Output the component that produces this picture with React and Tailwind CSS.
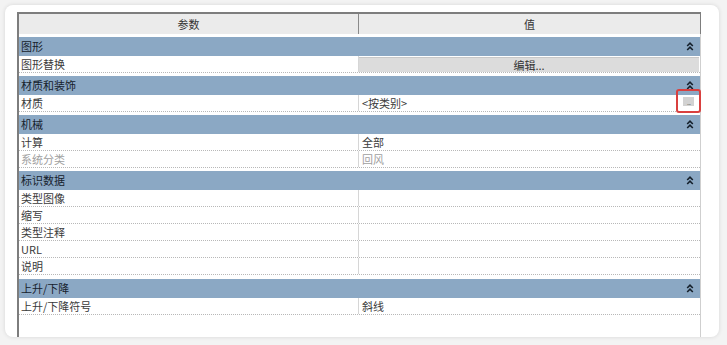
import React from "react";

const font = { fontFamily: '"Noto Sans CJK SC", "Noto Sans", sans-serif' };

function Chevrons() {
  return (
    <svg width="8" height="9" viewBox="0 0 8 9" className="block shrink-0">
      <path d="M1.2 4 L4 1.2 L6.8 4" fill="none" stroke="#16212c" strokeWidth="1.6" />
      <path d="M1.2 8 L4 5.2 L6.8 8" fill="none" stroke="#16212c" strokeWidth="1.6" />
    </svg>
  );
}

function Section({ title }) {
  return (
    <div className="relative h-[19px] shrink-0 bg-[#8ba8c4] flex items-center justify-between pl-[2px] pr-[6px] text-[11px] text-[#16212c]">
      <span className="leading-none">{title}</span>
      <Chevrons />
    </div>
  );
}

function Row({ label, value, gray, children }) {
  return (
    <div className="h-[17px] shrink-0 flex border-b border-dotted border-[#b8b8b8] text-[11px]">
      <div className={`w-[340px] shrink-0 flex items-center pl-[2px] border-r border-[#d6d6d6] ${gray ? "text-[#a0a0a0]" : "text-[#3a3a3a]"}`}>
        <span className="leading-none">{label}</span>
      </div>
      <div className={`flex-1 flex items-center pl-[3px] relative ${gray ? "text-[#a0a0a0]" : "text-[#3a3a3a]"}`}>
        {children ? children : <span className="leading-none">{value}</span>}
      </div>
    </div>
  );
}

function Spacer() {
  return <div className="h-[3px] shrink-0 bg-white" />;
}

export default function App() {
  return (
    <div className="w-[727px] h-[345px] bg-[#f3f3f3] p-[5px] overflow-hidden" style={font}>
      <div className="w-[714px] h-[332px] bg-white rounded-lg shadow-[0_0_4px_rgba(0,0,0,0.12)] overflow-hidden pl-[12px] pt-[7px]">
        <div className="w-[684px] h-[330px] border-l-2 border-[#7d7d7d] border-r border-r-[#cfcfcf] flex flex-col">
          <div className="h-[22px] shrink-0 flex border-t-2 border-[#7d7d7d] bg-[#ebebeb] text-[11px] text-[#333] border-r border-r-[#7d7d7d] -mr-px">
            <div className="w-[340px] shrink-0 flex items-center justify-center border-r border-[#8a8a8a]">
              <span className="leading-none">参数</span>
            </div>
            <div className="flex-1 flex items-center justify-center">
              <span className="leading-none">值</span>
            </div>
          </div>
          <Spacer />
          <Section title="图形" />
          <Row label="图形替换">
            <div className="absolute left-0 top-[1px] bottom-0 right-[1px] bg-[#dcdcdc] border-t border-[#c8c8c8] flex items-center justify-center">
              <span className="leading-none text-[#333]">编辑...</span>
            </div>
          </Row>
          <Spacer />
          <Section title="材质和装饰" />
          <Row label="材质">
            <span className="leading-none">&lt;按类别&gt;</span>
            <div className="absolute right-[-1px] top-[-6px] w-[25px] h-[24px] border-2 border-[#d9403f] rounded-[3px] flex items-center justify-center">
              <div className="w-[11px] h-[9px] bg-[#d2d2d2] flex items-end justify-center text-[8px] leading-[8px] text-[#8a8a8a] tracking-[-1px]">...</div>
            </div>
          </Row>
          <Spacer />
          <Section title="机械" />
          <Row label="计算" value="全部" />
          <Row label="系统分类" value="回风" gray />
          <Spacer />
          <Section title="标识数据" />
          <Row label="类型图像" value="" />
          <Row label="缩写" value="" />
          <Row label="类型注释" value="" />
          <Row label="URL" value="" />
          <Row label="说明" value="" />
          <div className="h-[4px] shrink-0 bg-white" />
          <Section title="上升/下降" />
          <Row label="上升/下降符号" value="斜线" />
        </div>
      </div>
    </div>
  );
}
